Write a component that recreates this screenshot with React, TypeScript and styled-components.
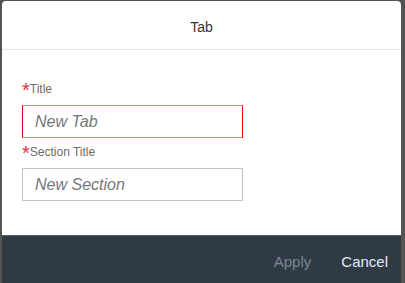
import React from "react";
import styled, { createGlobalStyle } from "styled-components";

const Global = createGlobalStyle`
  html, body { margin: 0; padding: 0; overflow: hidden; background: #545454; }
  body { width: 405px; height: 283px; font-family: "Liberation Sans", Arial, sans-serif; }
  * { box-sizing: border-box; }
`;

const Dialog = styled.div`
  margin: 1px 0 0 2px;
  width: 399px;
  background: #ffffff;
  border-radius: 4px 4px 0 0;
  display: flex;
  flex-direction: column;
`;

const Header = styled.div`
  height: 49px;
  padding-top: 3px;
  border-bottom: 1px solid #e5e5e5;
  display: flex;
  align-items: center;
  justify-content: center;
  font-size: 14px;
  color: #32363a;
`;

const Content = styled.div`
  height: 185px;
  padding: 31px 20px 0 20px;
  display: flex;
  flex-direction: column;
`;

const Field = styled.div`
  display: flex;
  flex-direction: column;
  margin-bottom: 6px;
`;

const Label = styled.label`
  height: 16px;
  line-height: 16px;
  font-size: 12px;
  color: #6a6d70;
  display: flex;
  align-items: center;
  margin-bottom: 8px;
`;

const Star = styled.span`
  color: #d9363e;
  font-size: 20px;
  line-height: 16px;
  padding-top: 2px;
  margin-right: 0px;
`;

const Input = styled.input<{ $error?: boolean }>`
  width: 221px;
  height: 33px;
  padding: 0 12px;
  font-family: "Liberation Sans", Arial, sans-serif;
  font-size: 16px;
  font-style: italic;
  color: #32363a;
  background: #ffffff;
  outline: none;
  border: 1px solid ${(p) => (p.$error ? "#f07575" : "#c6c6c6")};
  border-left-color: ${(p) => (p.$error ? "#e00000" : "#bfbfbf")};
  border-right-color: ${(p) => (p.$error ? "#ff0000" : "#bfbfbf")};
  &::placeholder { color: #74777a; opacity: 1; }
`;

const Footer = styled.div`
  height: 52px;
  background: #2f3a45;
  border-top: 1px solid #57616b;
  display: flex;
  align-items: center;
  justify-content: flex-end;
  padding: 0 5px 0 0;
  gap: 14px;
`;

const Button = styled.button<{ $disabled?: boolean }>`
  background: transparent;
  border: none;
  padding: 0 8px;
  height: 36px;
  font-family: "Liberation Sans", Arial, sans-serif;
  font-size: 15px;
  color: ${(p) => (p.$disabled ? "#7b8792" : "#e2eaf1")};
`;

export default function App() {
  return (
    <>
      <Global />
      <Dialog>
        <Header>Tab</Header>
        <Content>
          <Field>
            <Label>
              <Star>*</Star>Title
            </Label>
            <Input $error placeholder="New Tab" />
          </Field>
          <Field>
            <Label>
              <Star>*</Star>Section Title
            </Label>
            <Input placeholder="New Section" />
          </Field>
        </Content>
        <Footer>
          <Button $disabled>Apply</Button>
          <Button>Cancel</Button>
        </Footer>
      </Dialog>
    </>
  );
}
